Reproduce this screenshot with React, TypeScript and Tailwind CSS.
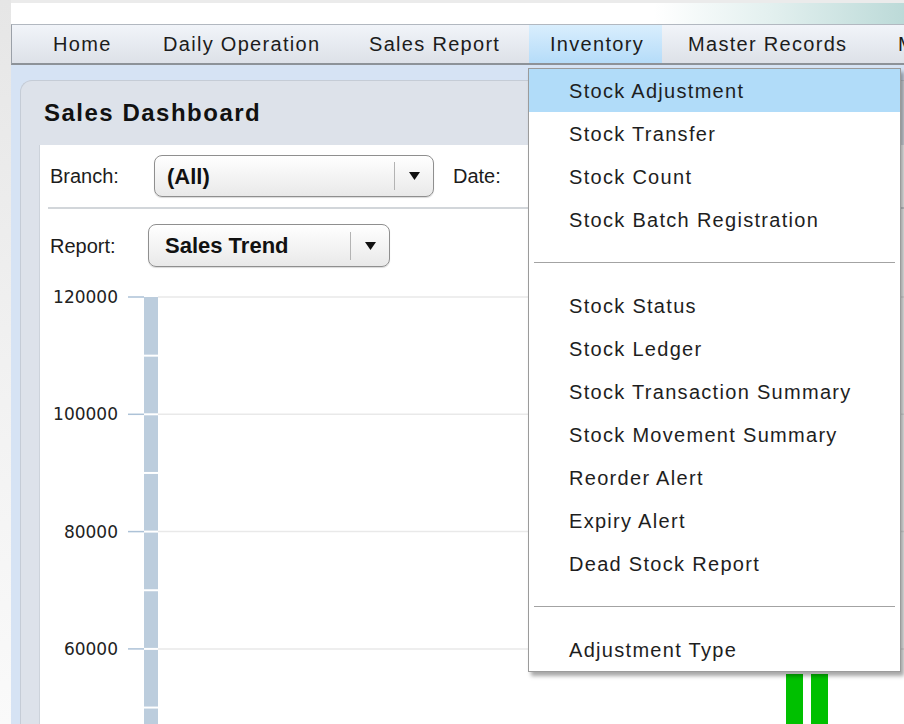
import React from "react";

const topMenu = [
  { label: "Home", cls: "w-[110px] pl-[21px]" },
  { label: "Daily Operation", cls: "w-[206px] pl-[21px]" },
  { label: "Sales Report", cls: "w-[181px] pl-[21px]" },
  { label: "Inventory", cls: "w-[133px] pl-[21px] bg-gradient-to-b from-[#d9eefd] to-[#b5dcf9]" },
  { label: "Master Records", cls: "w-[215px] pl-[26px]" },
  { label: "M", cls: "w-[40px] pl-[21px]" },
];

const inventoryItems = [
  "Stock Adjustment",
  "Stock Transfer",
  "Stock Count",
  "Stock Batch Registration",
  "-",
  "Stock Status",
  "Stock Ledger",
  "Stock Transaction Summary",
  "Stock Movement Summary",
  "Reorder Alert",
  "Expiry Alert",
  "Dead Stock Report",
  "-",
  "Adjustment Type",
];

function Arrow() {
  return (
    <svg width="11" height="8" viewBox="0 0 11 8">
      <path d="M0 0 H11 L5.5 8 Z" fill="#111" />
    </svg>
  );
}

function Combo({ value, className }: { value: string; className: string }) {
  return (
    <div
      className={
        "flex items-center rounded-[8px] border border-[#8f8f8f] bg-gradient-to-b from-white to-[#e9e9e9] shadow-[0_1px_1px_rgba(0,0,0,0.15)] " +
        className
      }
    >
      <span className="flex-1 text-[22px] font-bold text-[#111]">{value}</span>
      <div className="h-[28px] w-px bg-[#b3b3b3]" />
      <div className="flex w-[38px] justify-center">
        <Arrow />
      </div>
    </div>
  );
}

function SalesChart() {
  const ticks = [120000, 100000, 80000, 60000];
  const top = 17;
  const step = 117.3;
  const gaps = [1, 2, 3, 4, 5, 6, 7].map((k) => top + k * (step / 2));
  return (
    <svg width="865" height="444" className="block">
      {ticks.map((t, i) => {
        const y = top + i * step;
        return (
          <g key={t}>
            <line x1="118" x2="865" y1={y} y2={y} stroke="#e9e9e9" strokeWidth="1.5" />
            <line x1="88" x2="104" y1={y} y2={y} stroke="#adc2d7" strokeWidth="1.5" />
            <text
              x="78"
              y={y + 6}
              textAnchor="end"
              fontFamily="DejaVu Sans, sans-serif"
              fontSize="17"
              fill="#222"
            >
              {t}
            </text>
          </g>
        );
      })}
      <rect x="104" y={top} width="14" height="440" fill="#bccddd" />
      {gaps.map((y) => (
        <rect key={y} x="104" y={y - 1} width="14" height="2" fill="#ffffff" />
      ))}
      <rect x="746" y="394" width="17" height="60" fill="#00c000" />
      <rect x="771" y="394" width="17" height="60" fill="#00c000" />
    </svg>
  );
}

export default function App() {
  return (
    <div className="relative flex h-[724px] w-[904px] overflow-hidden bg-[#ebebeb] font-['Liberation_Sans',Arial,sans-serif] text-[#1c1c1c]">
      {/* left frame strip */}
      <div className="w-[11px] shrink-0 bg-gradient-to-b from-[#e6e6e6] via-[#f1f1f1] to-[#fafafa]" />

      <div className="flex min-w-0 flex-1 flex-col pt-[3px]">
        {/* header band */}
        <div className="h-[21px] bg-[linear-gradient(to_right,#ffffff_72%,#e3f0ef_85%,#bcdad8_100%)]" />

        {/* menu bar */}
        <div className="flex h-[41px] shrink-0 border-t border-l border-b-2 border-t-[#b2b8c0] border-l-[#9aa0a8] border-b-[#8d9298] bg-gradient-to-b from-[#f1f4f9] to-[#dde1e8] pl-[20px]">
          {topMenu.map((m) => (
            <div
              key={m.label}
              className={"flex shrink-0 items-center text-[20px] tracking-[1.3px] whitespace-nowrap " + m.cls}
            >
              {m.label}
            </div>
          ))}
        </div>

        {/* workspace */}
        <div className="flex flex-1 flex-col bg-[#d6e3f4] pt-[15px] pl-[9px]">
          <div className="flex flex-1 flex-col rounded-tl-[12px] border-t border-l border-[#c5ccd6] bg-[#dde2ea]">
            <div className="flex h-[64px] shrink-0 items-center pl-[23px] text-[24px] font-bold tracking-[1.5px] text-[#111]">
              Sales Dashboard
            </div>

            <div className="ml-[18px] flex flex-1 flex-col border-l border-[#cdd3db] bg-white">
              <div className="flex h-[62px] items-center pl-[10px]">
                <span className="w-[104px] text-[20px]">Branch:</span>
                <Combo value="(All)" className="h-[42px] w-[280px] pl-[12px]" />
                <span className="ml-[19px] text-[20px]">Date:</span>
              </div>
              <div className="ml-[8px] h-[2px] bg-[#d2d6da]" />
              <div className="pt-[15px] pb-[13px] pl-[10px]">
                <div className="flex items-center">
                  <span className="w-[98px] text-[20px]">Report:</span>
                  <Combo value="Sales Trend" className="h-[43px] w-[242px] pl-[16px]" />
                </div>
              </div>
              <SalesChart />
            </div>
          </div>
        </div>
      </div>

      {/* open Inventory menu */}
      <div className="absolute top-[68px] left-[528px] w-[373px] border border-[#9b9b9b] bg-white shadow-[3px_4px_4px_rgba(0,0,0,0.35)]">
        {inventoryItems.map((item, i) =>
          item === "-" ? (
            <div key={i} className="flex h-[43px] items-center px-[5px]">
              <div className="h-[1.5px] w-full bg-[#a3a3a3]" />
            </div>
          ) : (
            <div
              key={i}
              className={
                "flex h-[43px] items-center pl-[40px] text-[20px] tracking-[1.3px] text-[#1e1e1e] " +
                (i === 0 ? "bg-[#b1dcf9]" : "")
              }
            >
              {item}
            </div>
          )
        )}
      </div>
    </div>
  );
}
